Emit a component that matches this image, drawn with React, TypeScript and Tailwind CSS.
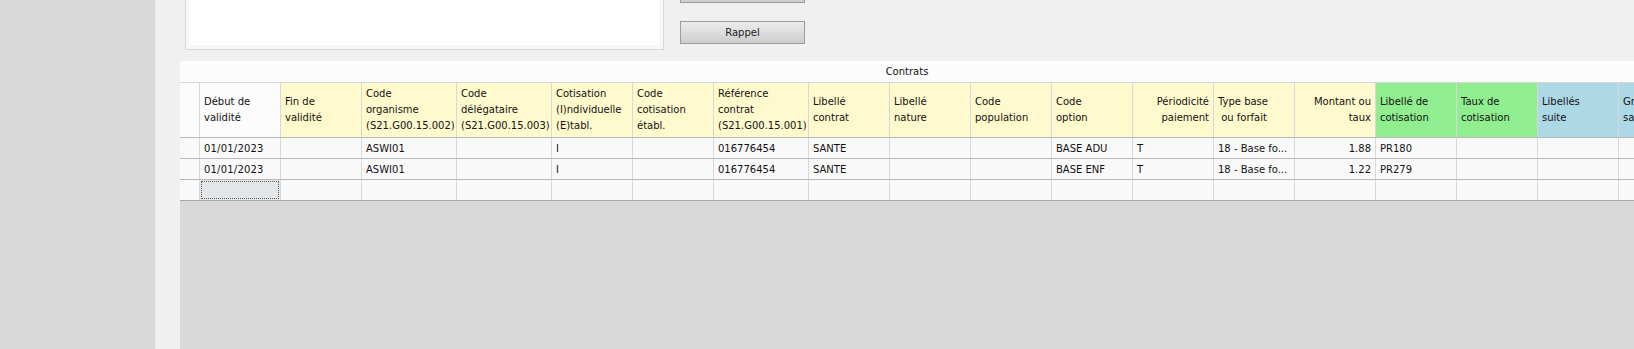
import React from "react";

type Col = {
  w: string;
  head: string[];
  bg: string;
  right?: boolean;
};

const cols: Col[] = [
  { w: "w-[20px]", head: [], bg: "bg-[#fcfcfc]" },
  { w: "w-[81px]", head: ["Début de", "validité"], bg: "bg-[#fcfcfc]" },
  { w: "w-[81px]", head: ["Fin de", "validité"], bg: "bg-[#fffacd]" },
  { w: "w-[95px]", head: ["Code", "organisme", "(S21.G00.15.002)"], bg: "bg-[#fffacd]" },
  { w: "w-[95px]", head: ["Code", "délégataire", "(S21.G00.15.003)"], bg: "bg-[#fffacd]" },
  { w: "w-[81px]", head: ["Cotisation", "(I)ndividuelle", "(E)tabl."], bg: "bg-[#fffacd]" },
  { w: "w-[81px]", head: ["Code", "cotisation", "établ."], bg: "bg-[#fffacd]" },
  { w: "w-[95px]", head: ["Référence", "contrat", "(S21.G00.15.001)"], bg: "bg-[#fffacd]" },
  { w: "w-[81px]", head: ["Libellé", "contrat"], bg: "bg-[#fffacd]" },
  { w: "w-[81px]", head: ["Libellé", "nature"], bg: "bg-[#fffacd]" },
  { w: "w-[81px]", head: ["Code", "population"], bg: "bg-[#fffacd]" },
  { w: "w-[81px]", head: ["Code", "option"], bg: "bg-[#fffacd]" },
  { w: "w-[81px]", head: ["Périodicité", "paiement"], bg: "bg-[#fffacd]", right: true },
  { w: "w-[81px]", head: ["Type base", "\u00a0ou forfait"], bg: "bg-[#fffacd]" },
  { w: "w-[81px]", head: ["Montant ou", "taux"], bg: "bg-[#fffacd]", right: true },
  { w: "w-[81px]", head: ["Libellé de", "cotisation"], bg: "bg-[#90ee90]" },
  { w: "w-[81px]", head: ["Taux de", "cotisation"], bg: "bg-[#90ee90]" },
  { w: "w-[81px]", head: ["Libellés", "suite"], bg: "bg-[#add8e6]" },
  { w: "w-[81px]", head: ["Groupe", "salariés"], bg: "bg-[#add8e6]" },
];

// values per column; index 14 (montant) is right aligned
const rows: string[][] = [
  ["", "01/01/2023", "", "ASWI01", "", "I", "", "016776454", "SANTE", "", "", "BASE ADU", "T", "18 - Base fo...", "1.88", "PR180", "", "", ""],
  ["", "01/01/2023", "", "ASWI01", "", "I", "", "016776454", "SANTE", "", "", "BASE ENF", "T", "18 - Base fo...", "1.22", "PR279", "", "", ""],
  ["", "", "", "", "", "", "", "", "", "", "", "", "", "", "", "", "", "", ""],
];

function HeaderRow() {
  return (
    <div className="flex h-[55px] shrink-0 border-b border-[#b8b8b8]">
      {cols.map((c, i) => (
        <div
          key={i}
          className={`${c.w} ${c.bg} flex shrink-0 flex-col justify-center overflow-hidden whitespace-nowrap border-r border-[#d8d8d8] px-[4px] leading-[16px] ${c.right ? "items-end" : "items-start"}`}
        >
          {c.head.map((l, j) => (
            <span key={j}>{l}</span>
          ))}
        </div>
      ))}
    </div>
  );
}

function DataRow({ values, last }: { values: string[]; last?: boolean }) {
  return (
    <div className={`flex h-[21px] shrink-0 border-b ${last ? "border-[#a8a8a8]" : "border-[#b8b8b8]"}`}>
      {values.map((v, i) => {
        const selected = last && i === 1;
        const right = i === 14;
        return (
          <div
            key={i}
            className={`${cols[i].w} flex shrink-0 items-center overflow-hidden whitespace-nowrap border-r border-[#d8d8d8] ${selected ? "bg-[#e3e7ea] p-[1px]" : "bg-[#f9f9f9] px-[4px]"} ${right ? "justify-end" : "justify-start"} ${i === 1 ? "tracking-[0.2px]" : ""}`}
          >
            {selected ? <div className="h-full w-full border border-dotted border-[#5a5a5a]" /> : v}
          </div>
        );
      })}
    </div>
  );
}

export default function App() {
  return (
    <div className="flex h-[349px] w-[1634px] overflow-hidden bg-[#f0f0f0] font-['DejaVu_Sans',sans-serif] text-[10px] text-[#111]">
      <div className="w-[156px] shrink-0 border-r border-[#e8e8e8] bg-[#d9d9d9]" />

      <div className="flex min-w-0 flex-1 flex-col pl-[24px]">
        {/* memo box and action buttons */}
        <div className="flex h-[61px] shrink-0 items-start">
          <div className="ml-[5px] flex h-[50px] w-[479px] flex-col border-x border-b border-[#d9d9d9] bg-[#f7f7f7] px-[4px] pb-[4px]">
            <div className="flex-1 bg-white" />
          </div>
          <div className="ml-[16px] flex w-[125px] flex-col gap-[18px]">
            <div className="mt-[-20px] h-[23px] border border-[#9c9c9c] bg-gradient-to-b from-[#ececec] to-[#cdcdcd]" />
            <button className="h-[23px] border border-[#9c9c9c] bg-gradient-to-b from-[#ececec] to-[#cdcdcd] text-[10px] font-normal text-[#222]">
              Rappel
            </button>
          </div>
        </div>

        {/* grid */}
        <div className="flex min-h-0 flex-1 flex-col overflow-hidden bg-[#d9d9d9]">
          <div className="flex h-[22px] shrink-0 items-center justify-center border-b border-[#d6d6d6] bg-[#fcfcfc] text-[10px]">
            Contrats
          </div>
          <HeaderRow />
          {rows.map((r, i) => (
            <DataRow key={i} values={r} last={i === rows.length - 1} />
          ))}
        </div>
      </div>
    </div>
  );
}
